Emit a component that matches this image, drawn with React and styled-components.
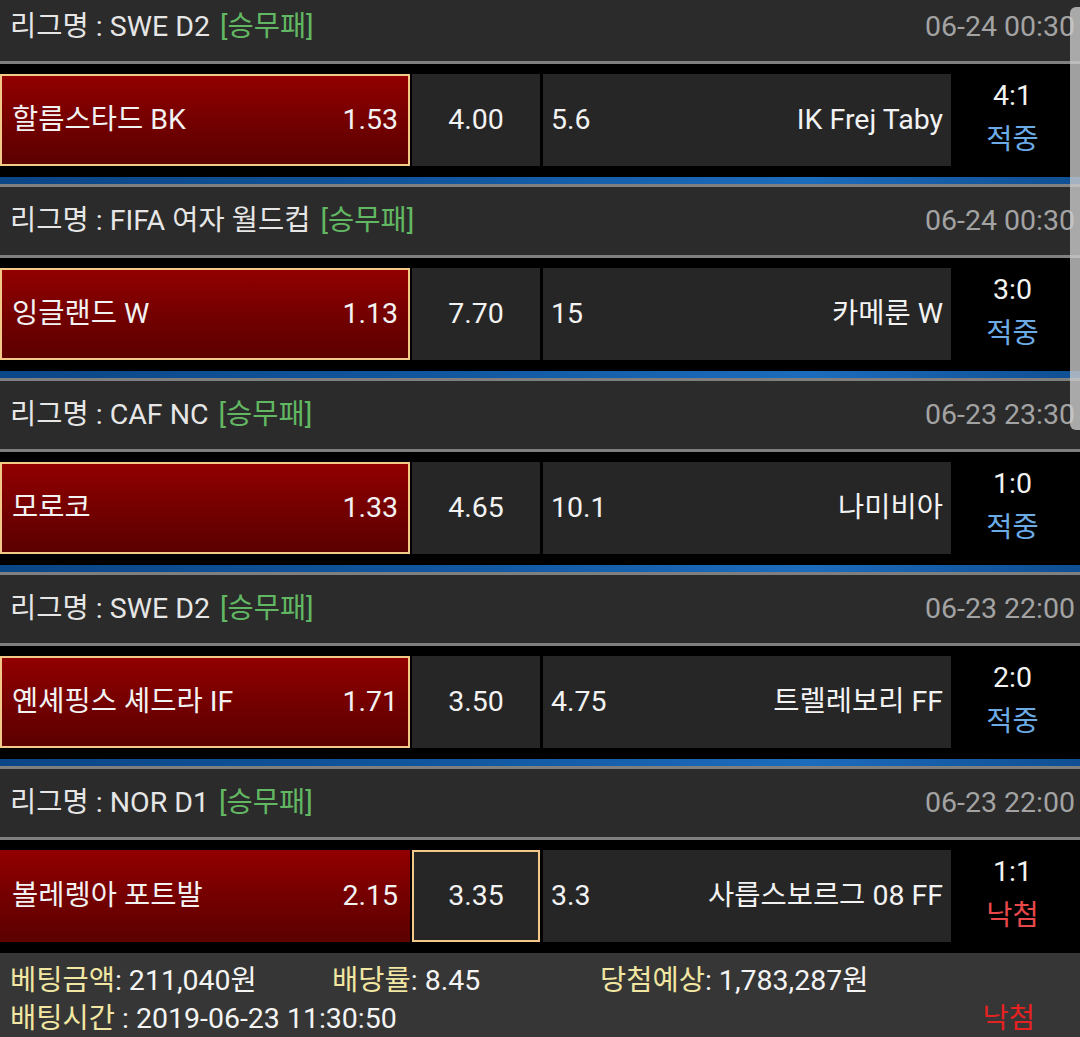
import React from "react";
import styled, { createGlobalStyle } from "styled-components";

const GlobalStyle = createGlobalStyle`
  html, body { margin: 0; padding: 0; background: #000; }
  body {
    font-family: Roboto, "Noto Sans CJK KR", "Noto Sans", sans-serif;
    -webkit-font-smoothing: antialiased;
  }
`;

const FS = "28.5px";

const Page = styled.div`
  position: relative;
  width: 1080px;
  height: 1037px;
  overflow: hidden;
  background: #000;
`;

const List = styled.div`
  margin-top: -7px;
`;

const Block = styled.section`
  display: flex;
  flex-direction: column;
`;

const Header = styled.div`
  display: flex;
  align-items: center;
  height: 68px;
  padding: 0 5px 0 10px;
  background: #2b2b2b;
  border-bottom: 3px solid #7f7f7f;
  font-size: ${FS};
  line-height: 34px;
  white-space: nowrap;
`;

const League = styled.span`
  color: #e6e6e6;
`;

const Tag = styled.span`
  color: #62b862;
  margin-left: 10px;
`;

const Time = styled.span`
  margin-left: auto;
  color: #a3a3a3;
`;

const Row = styled.div`
  display: grid;
  grid-template-columns: 410px 129px 408px 1fr;
  column-gap: 2px;
  height: 92px;
  padding: 10px 8px 11px 0;
  background: #000;
`;

const Cell = styled.div`
  height: 92px;
  box-sizing: border-box;
  display: flex;
  align-items: center;
  justify-content: ${(p) => p.$justify || "space-between"};
  padding: 0 ${(p) => p.$pad || 10}px;
  font-size: ${FS};
  line-height: 34px;
  color: #f2f2f2;
  white-space: nowrap;
  background: ${(p) =>
    p.$red ? "linear-gradient(180deg, #920000 0%, #6f0000 60%, #5c0000 100%)" : "#262626"};
  border: ${(p) => (p.$picked ? "2px solid #f3c98a" : "none")};
`;

const DrawCell = styled(Cell)`
  margin-right: 1px;
`;

const Score = styled.div`
  height: 92px;
  box-sizing: border-box;
  display: flex;
  flex-direction: column;
  align-items: center;
  justify-content: center;
  padding-bottom: 4px;
  font-size: ${FS};
  line-height: 44px;
`;

const ScoreNum = styled.span`
  color: #f2f2f2;
`;

const Result = styled.span`
  color: ${(p) => (p.$win ? "#6cabe6" : "#e8484a")};
`;

const Divider = styled.div`
  height: 7px;
  background: linear-gradient(90deg, #0b4687 0%, #11569e 40%, #1c6cbd 75%, #0f4e92 100%);
  border-bottom: 3px solid #7f7f7f;
`;

const Summary = styled.div`
  background: #363636;
  padding: 8px 45px 0 10px;
  font-size: ${FS};
  color: #f4f4f4;
  white-space: nowrap;
`;

const SummaryRow = styled.div`
  display: grid;
  grid-template-columns: 322px 268px 1fr;
  line-height: 40px;
`;

const SummaryRow2 = styled.div`
  display: flex;
  justify-content: space-between;
  line-height: 36px;
`;

const Label = styled.span`
  color: #f1e6a2;
`;

const Lost = styled.span`
  color: #e42222;
`;

const Scrollbar = styled.div`
  position: absolute;
  right: 0;
  top: 7px;
  width: 10px;
  height: 423px;
  background: rgba(205, 205, 205, 0.78);
  border-radius: 6px 0 0 6px;
`;

const matches = [
  {
    league: "SWE D2",
    time: "06-24 00:30",
    home: "할름스타드 BK",
    h: "1.53",
    d: "4.00",
    a: "5.6",
    away: "IK Frej Taby",
    score: "4:1",
    win: true,
    pick: "h",
  },
  {
    league: "FIFA 여자 월드컵",
    time: "06-24 00:30",
    home: "잉글랜드 W",
    h: "1.13",
    d: "7.70",
    a: "15",
    away: "카메룬 W",
    score: "3:0",
    win: true,
    pick: "h",
  },
  {
    league: "CAF NC",
    time: "06-23 23:30",
    home: "모로코",
    h: "1.33",
    d: "4.65",
    a: "10.1",
    away: "나미비아",
    score: "1:0",
    win: true,
    pick: "h",
  },
  {
    league: "SWE D2",
    time: "06-23 22:00",
    home: "옌셰핑스 셰드라 IF",
    h: "1.71",
    d: "3.50",
    a: "4.75",
    away: "트렐레보리 FF",
    score: "2:0",
    win: true,
    pick: "h",
  },
  {
    league: "NOR D1",
    time: "06-23 22:00",
    home: "볼레렝아 포트발",
    h: "2.15",
    d: "3.35",
    a: "3.3",
    away: "사릅스보르그 08 FF",
    score: "1:1",
    win: false,
    pick: "d",
  },
];

export default function App() {
  return (
    <>
      <GlobalStyle />
      <Page>
        <List>
          {matches.map((m, i) => (
            <Block key={i}>
              <Header>
                <League>리그명 : {m.league}</League>
                <Tag>[승무패]</Tag>
                <Time>{m.time}</Time>
              </Header>
              <Row>
                <Cell $red $picked={m.pick === "h"} $pad={m.pick === "h" ? 10 : 12}>
                  <span>{m.home}</span>
                  <span>{m.h}</span>
                </Cell>
                <DrawCell $justify="center" $picked={m.pick === "d"}>
                  {m.d}
                </DrawCell>
                <Cell $pad={8}>
                  <span>{m.a}</span>
                  <span>{m.away}</span>
                </Cell>
                <Score>
                  <ScoreNum>{m.score}</ScoreNum>
                  <Result $win={m.win}>{m.win ? "적중" : "낙첨"}</Result>
                </Score>
              </Row>
              {i < matches.length - 1 && <Divider />}
            </Block>
          ))}
        </List>
        <Summary>
          <SummaryRow>
            <span>
              <Label>베팅금액</Label>: 211,040원
            </span>
            <span>
              <Label>배당률</Label>: 8.45
            </span>
            <span>
              <Label>당첨예상</Label>: 1,783,287원
            </span>
          </SummaryRow>
          <SummaryRow2>
            <span>
              <Label>배팅시간</Label> : 2019-06-23 11:30:50
            </span>
            <Lost>낙첨</Lost>
          </SummaryRow2>
        </Summary>
        <Scrollbar />
      </Page>
    </>
  );
}
